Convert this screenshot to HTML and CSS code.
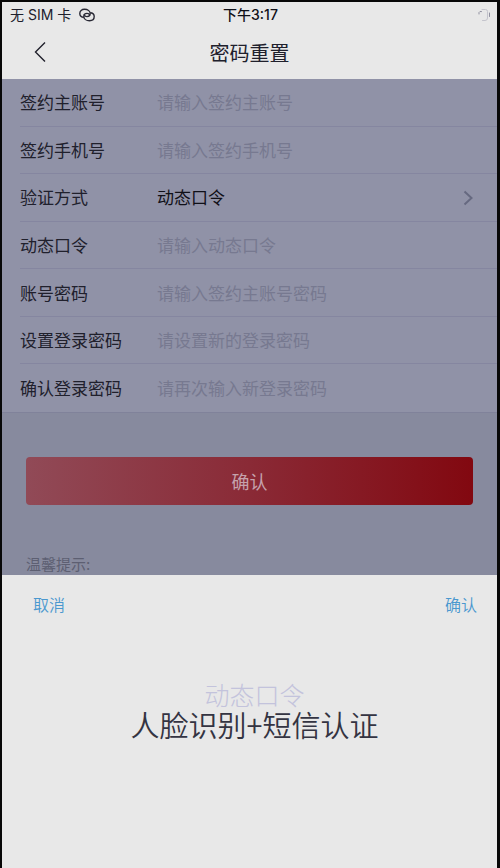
FILE: index.html
```
<!DOCTYPE html>
<html lang="zh-CN">
<head>
<meta charset="utf-8">
<meta name="viewport" content="width=device-width, initial-scale=1">
<title>密码重置</title>
<link rel="stylesheet" href="styles.css">
</head>
<body>
<div class="screen">
  <div class="status">
    <div class="carrier">
      <span>无 SIM 卡</span>
      <svg class="link-icon" viewBox="0 0 16 14" width="16" height="14" aria-hidden="true">
        <path d="M4.200 9.300C2 8.900.8 7.400.8 5.500.8 3 2.700 1.300 5.500 1.300c3.200 0 5.700 1.900 5.700 4.300 0 1.900-1.400 3-3.200 3-1.400 0-2.400-.7-2.600-1.800"/>
        <path d="M11.800 4.700c2.200.4 3.400 1.900 3.400 3.800 0 2.500-1.900 4.200-4.700 4.200-3.200 0-5.700-1.900-5.700-4.300 0-1.900 1.400-3 3.200-3 1.400 0 2.400.7 2.600 1.800"/>
      </svg>
    </div>
    <time class="time">下午3:17</time>
    <svg class="lock-icon" viewBox="0 0 14 14" width="14" height="14" aria-hidden="true">
      <path d="M2 6V4.500Q2.500 3 4.500 3.500" class="lock-dark"/>
      <path d="M5 1.500h3.500q2 0 2 2v6.500q0 2.500-2.500 2.500H5.500"/>
      <path d="M12.500 5v3.500" class="lock-dark"/>
    </svg>
  </div>
  <header class="nav">
    <button class="back" type="button" aria-label="返回">
      <svg viewBox="0 0 12 22" width="12" height="22" aria-hidden="true"><path d="M11 1.500 1.500 11 11 20.500"/></svg>
    </button>
    <h1>密码重置</h1>
  </header>
  <form class="page">
    <div class="fields">
      <div class="row"><label for="account">签约主账号</label><input id="account" type="text" placeholder="请输入签约主账号"></div>
      <div class="row"><label for="phone">签约手机号</label><input id="phone" type="tel" placeholder="请输入签约手机号"></div>
      <div class="row">
        <label for="method">验证方式</label>
        <select id="method"><option>动态口令</option><option>人脸识别+短信认证</option></select>
        <svg class="chevron" viewBox="0 0 10 16" width="10" height="16" aria-hidden="true"><path d="m1.500 1.500 7 6.500-7 6.500"/></svg>
      </div>
      <div class="row"><label for="token">动态口令</label><input id="token" type="text" placeholder="请输入动态口令"></div>
      <div class="row"><label for="pin">账号密码</label><input id="pin" type="password" placeholder="请输入签约主账号密码"></div>
      <div class="row"><label for="new-password">设置登录密码</label><input id="new-password" type="password" placeholder="请设置新的登录密码"></div>
      <div class="row"><label for="repeat-password">确认登录密码</label><input id="repeat-password" type="password" placeholder="请再次输入新登录密码"></div>
    </div>
    <button class="submit" type="button">确认</button>
    <p class="tip">温馨提示:</p>
  </form>
  <section class="sheet" aria-label="验证方式">
    <div class="sheet-bar">
      <button type="button">取消</button>
      <button type="button">确认</button>
    </div>
    <div class="picker">
      <button class="option" type="button">动态口令</button>
      <button class="option selected" type="button">人脸识别+短信认证</button>
    </div>
  </section>
</div>
</body>
</html>
```
FILE: styles.css
```
* {
  box-sizing: border-box;
}

body {
  margin: 0;
  background: #080808;
  color: #20202c;
  font-family: Inter, "Noto Sans CJK SC", sans-serif;
}

button,
input,
select {
  margin: 0;
  padding: 0;
  border: 0;
  background: none;
  color: inherit;
  font: inherit;
}

.screen {
  display: flex;
  flex-direction: column;
  min-height: 100vh;
  border: solid #080808;
  border-width: 2px 3px 0 2px;
  background: #e8e8e8;
}

.status {
  display: grid;
  grid-template-columns: 1fr auto 1fr;
  align-items: center;
  height: 26px;
  padding: 0 6px 0 8px;
  font-size: 14px;
  line-height: 20px;
}

.carrier {
  display: flex;
  align-items: center;
  gap: 8px;
}

.link-icon,
.lock-icon {
  fill: none;
  stroke: #292935;
  stroke-width: 1.4;
  stroke-linecap: round;
}

.time {
  color: #101018;
  font-weight: 500;
}

.lock-icon {
  justify-self: end;
  stroke: #c4c4cc;
  stroke-width: 1;
}

.lock-dark {
  stroke: #9090a0;
}

.nav {
  display: grid;
  grid-template-columns: 1fr auto 1fr;
  align-items: center;
  height: 51px;
}

.back {
  display: flex;
  justify-self: start;
  padding: 6px 32px 10px;
}

.back svg {
  fill: none;
  stroke: #20202c;
  stroke-width: 1.4;
}

.nav h1 {
  margin: 0;
  font-size: 20px;
  font-weight: 400;
  line-height: 28px;
}

.page {
  height: 496px;
  overflow: hidden;
  background: #878a9e;
}

.fields {
  display: grid;
  grid-template-rows: repeat(7, 1fr);
  height: 334px;
  padding-left: 18px;
  border-bottom: 1px solid #80829a;
  background: #9092a7;
}

.row {
  display: flex;
  align-items: center;
  padding: 2px 24px 0 0;
  border-bottom: 1px solid #8586a0;
  font-size: 17px;
  line-height: 24px;
}

.row:last-child {
  border-bottom: 0;
}

.row label {
  flex: 0 0 137px;
}

.row input,
.row select {
  flex: 1;
  min-width: 0;
  height: 32px;
  appearance: none;
}

.row input::placeholder {
  color: #777990;
  opacity: 1;
}

.row select {
  color: #101018;
}

.chevron {
  fill: none;
  stroke: #666980;
  stroke-width: 2;
}

.submit {
  display: block;
  width: calc(100% - 48px);
  height: 48px;
  margin: 44px 24px 0;
  border-radius: 4px;
  background: linear-gradient(90deg, #914a57, #8a2a36 50%, #820810);
  color: #c5a2ac;
  font-size: 18px;
}

.tip {
  margin: 50px 24px 0;
  color: #5d5f72;
  font-size: 15px;
  line-height: 20px;
}

.sheet {
  flex: 1;
}

.sheet-bar {
  display: flex;
  justify-content: space-between;
  padding: 18px 20px 0 31px;
  color: #4a98cf;
  font-size: 16px;
  font-weight: 350;
  line-height: 24px;
}

.picker {
  display: flex;
  flex-direction: column;
  align-items: center;
  padding: 62px 0 40px 10px;
  font-family: "Noto Sans CJK SC", sans-serif;
  font-weight: 300;
}

.option {
  color: #c3c3dc;
  font-size: 25px;
  line-height: 30px;
}

.option.selected {
  color: #343442;
  font-size: 29px;
  font-weight: 350;
}
```
